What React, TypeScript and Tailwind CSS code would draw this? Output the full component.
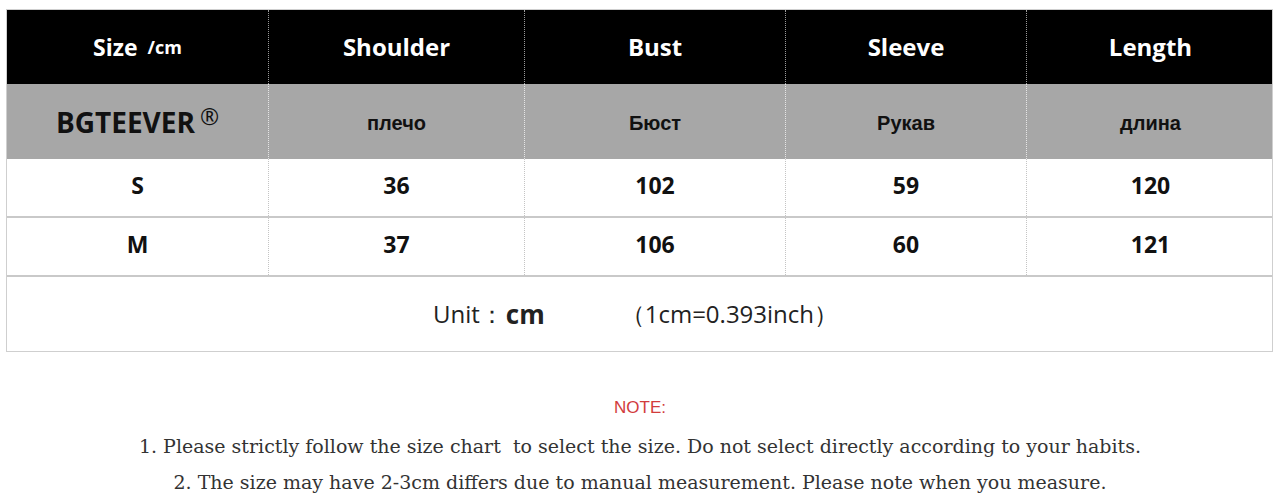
const cols = "grid grid-cols-[262px_256px_261px_241px_247px]";
const sans = "font-['Open_Sans','Lato',sans-serif]";

const heads = ["Shoulder", "Bust", "Sleeve", "Length"];
const ru = ["плечо", "Бюст", "Рукав", "длина"];
const rows = [
  ["S", "36", "102", "59", "120"],
  ["M", "37", "106", "60", "121"],
];

export default function App() {
  return (
    <div className="w-[1280px] h-[501px] overflow-hidden bg-white">
      <div className={`ml-[6px] mt-[9px] w-[1267px] border border-[#cfcfcf] ${sans}`}>
        {/* header */}
        <div className={`${cols} h-[74px] bg-black text-white font-bold`}>
          <div className="flex items-center justify-center gap-[10px] border-r border-dotted border-[#9a9a9a]">
            <span className="text-[23px]">Size</span>
            <span className="text-[18px]">/cm</span>
          </div>
          {heads.map((h, i) => (
            <div
              key={h}
              className={`flex items-center justify-center text-[24px] ${i < 3 ? "border-r border-dotted border-[#9a9a9a]" : ""}`}
            >
              {h}
            </div>
          ))}
        </div>

        {/* russian row */}
        <div className={`${cols} h-[75px] bg-[#a7a7a7] text-[#111] font-bold`}>
          <div className="flex items-center justify-center border-r border-dotted border-[#e6e6e6]">
            <span className="text-[28px]">BGTEEVER</span>
            <span className="ml-[5px] -mt-[10px] text-[23px] font-normal">®</span>
          </div>
          {ru.map((t, i) => (
            <div
              key={t}
              className={`flex items-center justify-center pt-[2px] font-['Liberation_Sans',sans-serif] text-[20px] ${i < 3 ? "border-r border-dotted border-[#e6e6e6]" : ""}`}
            >
              {t}
            </div>
          ))}
        </div>

        {/* data */}
        {rows.map((r) => (
          <div
            key={r[0]}
            className={`${cols} h-[59px] border-b-2 border-[#c9c9c9] text-[#111] font-bold text-[23px]`}
          >
            {r.map((c, i) => (
              <div
                key={i}
                className={`flex items-center justify-center pb-[4px] ${i < 4 ? "border-r border-dotted border-[#c4c4c4]" : ""}`}
              >
                {c}
              </div>
            ))}
          </div>
        ))}

        {/* unit */}
        <div className="flex h-[74px] items-center justify-center pr-[8px] text-[#222]">
          <span className="text-[24px]">Unit：</span>
          <span className="ml-[2px] text-[26px] font-bold">cm</span>
          <span className="ml-[76px] text-[24px]">（1cm=0.393inch）</span>
        </div>
      </div>

      {/* notes */}
      <div className="mt-[46px] flex flex-col items-center">
        <div className="font-['Liberation_Sans',sans-serif] text-[17px] leading-[20px] text-[#d23c3c]">
          NOTE:
        </div>
        <div className="mt-[10px] font-['DejaVu_Serif',serif] text-[19px] leading-[36px] text-[#333] text-center">
          <div>
            1. Please strictly follow the size chart&nbsp; to select the size. Do not select directly according to your habits.
          </div>
          <div>2. The size may have 2-3cm differs due to manual measurement. Please note when you measure.</div>
        </div>
      </div>
    </div>
  );
}
